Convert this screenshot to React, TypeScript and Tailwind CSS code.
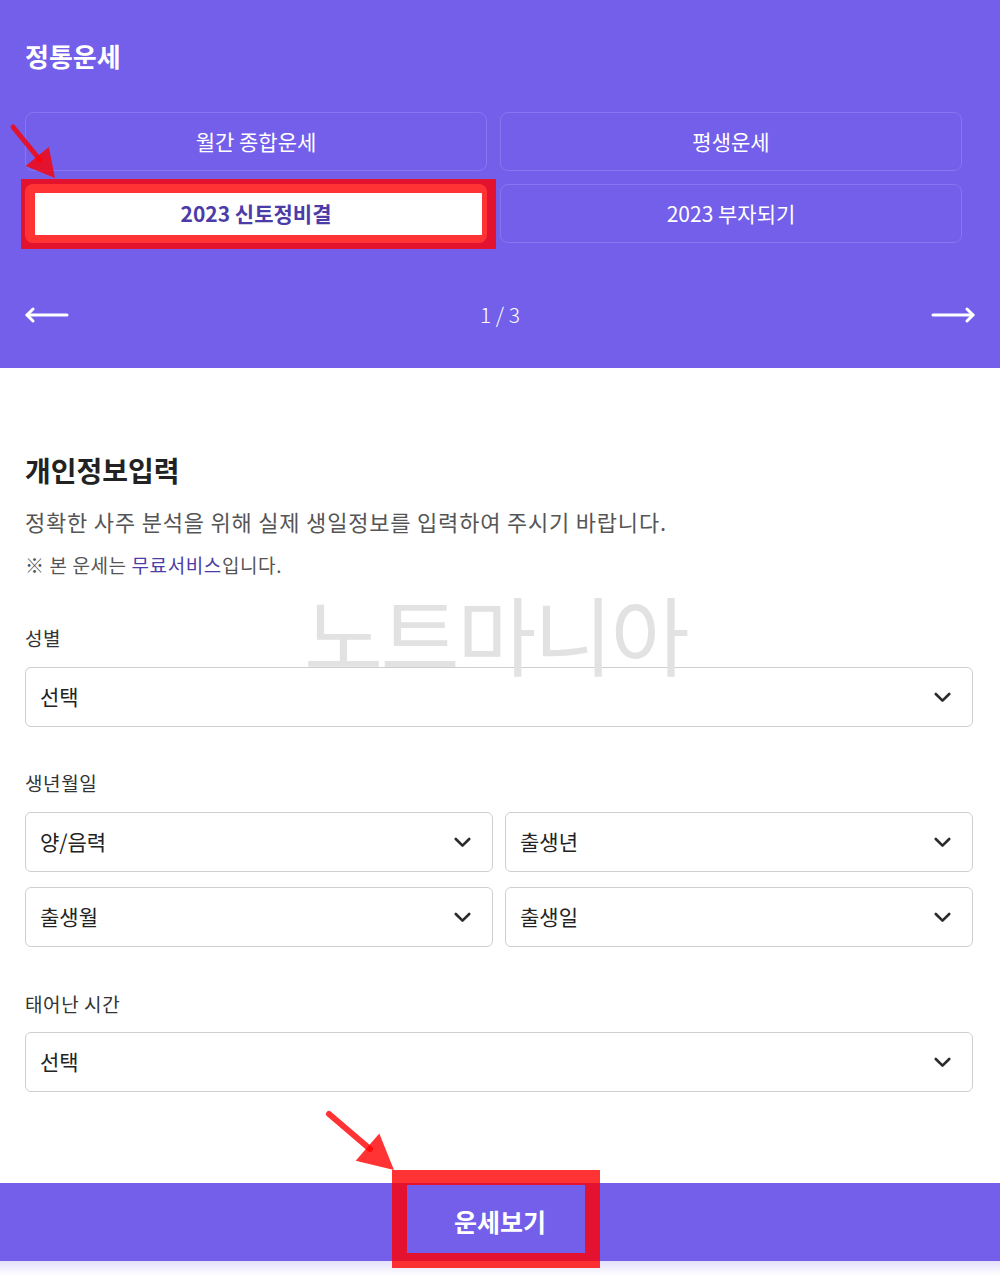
import React from "react";

const font = { fontFamily: '"Noto Sans CJK KR", "Noto Sans", sans-serif' };

function Chevron() {
    return (
        <svg width="17" height="11" viewBox="0 0 17 11" fill="none">
            <polyline points="1.8,2 8.5,8.6 15.2,2" stroke="#2b2b2b" strokeWidth="2.6" strokeLinecap="round" strokeLinejoin="round" />
        </svg>
    );
}

function Select({ label }: { label: string }) {
    return (
        <div className="flex h-[60px] items-center justify-between rounded-md border border-[#cfcfcf] bg-white pl-[14px] pr-[21px]">
            <span className="text-[21px] text-[#222]">{label}</span>
            <Chevron />
        </div>
    );
}

const tabs = ["월간 종합운세", "평생운세", "2023 신토정비결", "2023 부자되기"];

export default function App() {
    return (
        <div className="relative w-[1000px] bg-white" style={font}>
            {/* 상단 운세 메뉴 */}
            <div className="relative h-[368px] bg-[#735fea] px-[25px] pt-[38px]">
                <h2 className="text-[26px] font-bold leading-[36px] text-white">정통운세</h2>
                <div className="mt-[38px] grid w-[937px] grid-cols-2 gap-[13px]">
                    {tabs.map((t) =>
                        t === "2023 신토정비결" ? (
                            <div key={t} className="flex h-[59px] items-center justify-center rounded-lg bg-white text-[21px] font-semibold text-[#4b3ca8]">
                                {t}
                            </div>
                        ) : (
                            <div key={t} className="flex h-[59px] items-center justify-center rounded-lg border border-[#8676f0] text-[21px] text-white">
                                {t}
                            </div>
                        )
                    )}
                </div>
                <div className="mt-[52px] flex h-[40px] items-center justify-between">
                    <svg width="44" height="16" viewBox="0 0 44 16" fill="none">
                        <line x1="2" y1="8" x2="42" y2="8" stroke="white" strokeWidth="3" strokeLinecap="round" />
                        <polyline points="8,2 2,8 8,14" stroke="white" strokeWidth="3" strokeLinecap="round" strokeLinejoin="round" />
                    </svg>
                    <span className="text-[21px] font-light text-white">1 / 3</span>
                    <svg width="44" height="16" viewBox="0 0 44 16" fill="none">
                        <line x1="2" y1="8" x2="42" y2="8" stroke="white" strokeWidth="3" strokeLinecap="round" />
                        <polyline points="36,2 42,8 36,14" stroke="white" strokeWidth="3" strokeLinecap="round" strokeLinejoin="round" />
                    </svg>
                </div>
                <div className="pointer-events-none absolute left-[21px] top-[179px] h-[70px] w-[475px] border-[14px] border-[#ff0000cc]" />
            </div>

            {/* 개인정보 입력 */}
            <div className="relative w-[973px] pl-[25px] pt-[84px]">
                <h3 className="text-[28px] font-bold leading-[36px] text-[#222]">개인정보입력</h3>
                <p className="mt-[18px] text-[22px] leading-[30px] tracking-[0.8px] text-[#555]">정확한 사주 분석을 위해 실제 생일정보를 입력하여 주시기 바랍니다.</p>
                <p className="mt-[16px] text-[19px] leading-[26px] tracking-[0.6px] text-[#555]">
                    ※ 본 운세는 <span className="text-[#4b3ca8]">무료서비스</span>입니다.
                </p>

                <div className="mt-[47px] text-[19px] leading-[26px] tracking-[0.4px] text-[#333]">성별</div>
                <div className="mt-[16px]">
                    <Select label="선택" />
                </div>

                <div className="mt-[43px] text-[19px] leading-[26px] tracking-[0.6px] text-[#333]">생년월일</div>
                <div className="mt-[16px] grid grid-cols-2 gap-x-[12px] gap-y-[15px]">
                    <Select label="양/음력" />
                    <Select label="출생년" />
                    <Select label="출생월" />
                    <Select label="출생일" />
                </div>

                <div className="mt-[44px] text-[19px] leading-[26px] tracking-[0.6px] text-[#333]">태어난 시간</div>
                <div className="mt-[15px]">
                    <Select label="선택" />
                </div>

                <div className="pointer-events-none absolute left-[304px] top-[222px] text-[86px] leading-none tracking-[-2.5px] text-[#e2e2e2]">노트마니아</div>
            </div>

            <div className="mt-[91px] flex h-[78px] items-center justify-center bg-[#735fea] text-[25px] font-bold text-white">운세보기</div>
            <div className="h-[15px] bg-gradient-to-b from-[#e4e0fb] to-white" />

            {/* 안내 표시 */}
            <div className="pointer-events-none absolute left-[392px] top-[1170px] h-[98px] w-[208px] border-[15px] border-[#ff0000cc]" />
            <svg className="pointer-events-none absolute left-0 top-0" width="1000" height="1276" viewBox="0 0 1000 1276">
                <line x1="13" y1="127" x2="40" y2="160" stroke="#ff0000cc" strokeWidth="5" strokeLinecap="round" />
                <polygon points="55,178 25.6,165.9 48.8,146.9" fill="#ff0000cc" />
                <line x1="329" y1="1114" x2="370" y2="1149" stroke="#ff0000cc" strokeWidth="6" strokeLinecap="round" />
                <polygon points="394,1170 355.7,1160.7 379.3,1133.5" fill="#ff0000cc" />
            </svg>
        </div>
    );
}
